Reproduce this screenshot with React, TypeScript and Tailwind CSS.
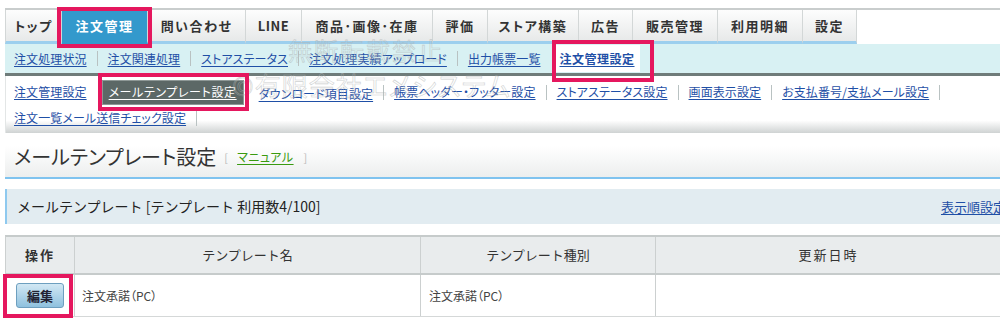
const tabs: { label: string; w: number; active?: boolean }[] = [
  { label: "トップ", w: 57 },
  { label: "注文管理", w: 86, active: true },
  { label: "問い合わせ", w: 98 },
  { label: "LINE", w: 56 },
  { label: "商品･画像･在庫", w: 131 },
  { label: "評価", w: 55 },
  { label: "ストア構築", w: 91 },
  { label: "広告", w: 54 },
  { label: "販売管理", w: 85 },
  { label: "利用明細", w: 85 },
  { label: "設定", w: 54 },
];

const sub1 = ["注文処理状況", "注文関連処理", "ストアステータス", "注文処理実績アップロード", "出力帳票一覧"];

function Sep() {
  return <span className="mx-[10px] inline-block h-[15px] w-px bg-[#b9c2c2]" />;
}

function Lnk({ children }: { children: React.ReactNode }) {
  return (
    <span className="text-[12px] tracking-[0.1px] text-[#1f4fa6] underline underline-offset-2 whitespace-nowrap">
      {children}
    </span>
  );
}

function Pink({ className }: { className: string }) {
  return <div className={"pointer-events-none absolute border-[4px] border-[#e5175e] " + className} />;
}

export default function App() {
  return (
    <div className="relative h-[319px] w-[1000px] overflow-hidden bg-white text-[#333] font-['Noto_Sans_CJK_JP','Noto_Sans',sans-serif] [font-feature-settings:'palt']">
      {/* top tabs */}
      <div className="mt-[8px] ml-[5px] flex h-[36px] border-t-2 border-[#c9cdcd]">
        {tabs.map((t) => (
          <div
            key={t.label}
            style={{ width: t.w }}
            className={
              "flex h-full items-center justify-center border-r border-[#d3d7d7] text-[13px] font-bold whitespace-nowrap " +
              (t.label === "LINE" ? "tracking-[0.5px] " : "tracking-[1.5px] ") +
              (t.active
                ? "bg-[#3399cc] text-white border-b-[3px] border-b-[#3399cc]"
                : "bg-[linear-gradient(to_bottom,#fdfdfd,#e7e9e9)] text-[#333] border-b-[3px] border-b-[#9ccfee] first:border-l")
            }
          >
            {t.label}
          </div>
        ))}
      </div>

      {/* sub nav */}
      <div className="ml-[5px] flex h-[32px] items-center border-b-[3px] border-[#6f7c7a] bg-[#d8f1f3] pl-[9px]">
        {sub1.map((s, i) => (
          <span key={s} className="flex items-center">
            {i > 0 && <Sep />}
            <Lnk>{s}</Lnk>
          </span>
        ))}
        <div className="ml-[14px] flex h-[27px] items-center bg-white px-[5px]">
          <span className="text-[12px] tracking-[0.5px] font-bold text-[#1f4fa6] underline underline-offset-2 whitespace-nowrap">
            注文管理設定
          </span>
        </div>
      </div>

      {/* third row */}
      <div className="ml-[5px] h-[57px] border-l border-[#e3e6e6] bg-[linear-gradient(to_bottom,#fff_78%,#cfd3d3_100%)] pl-[8px] pt-[4px]">
        <div className="flex h-[24px] items-center">
          <Lnk>注文管理設定</Lnk>
          <div className="ml-[16px] flex h-[23px] items-center bg-[#5c6866] px-[6px] outline outline-1 outline-[#8e9896]">
            <span className="text-[12px] tracking-[0.6px] text-white underline underline-offset-2 whitespace-nowrap">
              メールテンプレート設定
            </span>
          </div>
          <span className="ml-[16px]">
            <Lnk>ダウンロード項目設定</Lnk>
          </span>
          <Sep />
          <Lnk>帳票ヘッダー・フッター設定</Lnk>
          <Sep />
          <Lnk>ストアステータス設定</Lnk>
          <Sep />
          <Lnk>画面表示設定</Lnk>
          <Sep />
          <Lnk>お支払番号/支払メール設定</Lnk>
          <Sep />
        </div>
        <div className="mt-[3px] flex h-[22px] items-center">
          <Lnk>注文一覧メール送信チェック設定</Lnk>
          <Sep />
        </div>
      </div>

      {/* title */}
      <div className="ml-[5px] flex h-[46px] items-center border-b-2 border-[#7fc3ef] bg-[linear-gradient(to_bottom,#fff_30%,#eceeee_100%)] pl-[9px] pt-[4px]">
        <span className="text-[20px] text-[#333] whitespace-nowrap">メールテンプレート設定</span>
        <span className="ml-[8px] text-[11px] text-[#bbb]">[</span>
        <span className="ml-[9px] text-[12px] tracking-[0.5px] text-[#3a9a10] underline underline-offset-2">マニュアル</span>
        <span className="ml-[10px] text-[11px] text-[#bbb]">]</span>
      </div>

      {/* panel */}
      <div className="mt-[10px] ml-[5px] flex h-[35px] items-center justify-between border-l-2 border-[#8ec9ef] bg-[#e2ecf1] pl-[10px]">
        <span className="text-[14px] text-[#222] whitespace-nowrap [font-feature-settings:normal]">
          メールテンプレート [テンプレート 利用数4/100]
        </span>
        <span className="mr-[-6px] text-[13px] text-[#1f4fa6] underline underline-offset-2 whitespace-nowrap">表示順設定</span>
      </div>

      {/* table */}
      <div className="mt-[11px] ml-[5px] border-t-2 border-[#c6cbcb] border-l border-l-[#ccd0d0]">
        <div className="grid h-[38px] grid-cols-[69px_346px_235px_345px] border-b-2 border-[#c6cbcb] bg-[#e9eced] text-[13px] text-[#333] [font-feature-settings:normal]">
          <div className="flex items-center justify-center border-r border-[#ccd0d0] font-bold tracking-[2px]">操作</div>
          <div className="flex items-center justify-center border-r border-[#ccd0d0]">テンプレート名</div>
          <div className="flex items-center justify-center border-r border-[#ccd0d0]">テンプレート種別</div>
          <div className="flex items-center justify-center tracking-[2px]">更新日時</div>
        </div>
        <div className="grid h-[42px] grid-cols-[69px_346px_235px_345px] border-b border-[#d5d8d8] text-[12px] text-[#444]">
          <div className="flex items-center justify-center border-r border-[#ccd0d0]">
            <div className="flex h-[25px] w-[48px] items-center justify-center rounded-[3px] border border-[#6d9fbf] bg-[linear-gradient(to_bottom,#d2e8f4,#8fc1de)] text-[13px] font-bold text-[#223]">
              編集
            </div>
          </div>
          <div className="flex items-center border-r border-[#ccd0d0] pl-[7px]">注文承諾（PC）</div>
          <div className="flex items-center border-r border-[#ccd0d0] pl-[8px]">注文承諾（PC）</div>
          <div />
        </div>
      </div>

      {/* watermark */}
      <div className="pointer-events-none absolute left-[288px] top-[38px] text-[24px] leading-none tracking-[2px] text-transparent [-webkit-text-stroke:0.6px_#b0b4b4] opacity-60">
        無断転載禁止
      </div>
      <div className="pointer-events-none absolute left-[232px] top-[72px] text-[26px] leading-none tracking-[1px] text-transparent [-webkit-text-stroke:0.6px_#b0b4b4] opacity-60">
        ©有限会社エメシステム
      </div>

      {/* highlight boxes */}
      <Pink className="left-[57px] top-[7px] h-[41px] w-[95px]" />
      <Pink className="left-[552px] top-[40px] h-[42px] w-[102px]" />
      <Pink className="left-[98px] top-[73px] h-[38px] w-[151px]" />
      <Pink className="left-[3px] top-[274px] h-[44px] w-[70px]" />
    </div>
  );
}
